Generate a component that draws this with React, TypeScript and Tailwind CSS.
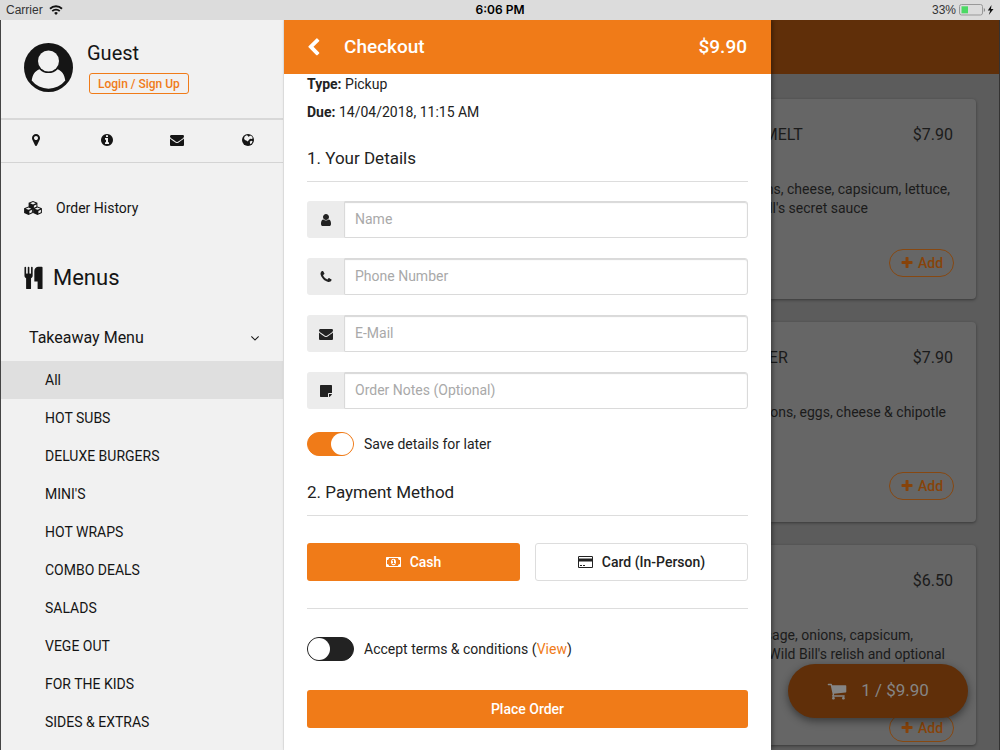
import type { ReactNode } from "react";

const icons = {
  marker: "M1152 640q0-106-75-181t-181-75-181 75-75 181 75 181 181 75 181-75 75-181zm256 0q0 109-33 179l-364 774q-16 33-47.5 52t-67.5 19-67.5-19-46.5-52l-365-774q-33-70-33-179 0-212 150-362t362-150 362 150 150 362z",
  info: "M1152 1376v-160q0-14-9-23t-23-9h-96v-512q0-14-9-23t-23-9h-320q-14 0-23 9t-9 23v160q0 14 9 23t23 9h96v320h-96q-14 0-23 9t-9 23v160q0 14 9 23t23 9h448q14 0 23-9t9-23zm-128-896v-160q0-14-9-23t-23-9h-192q-14 0-23 9t-9 23v160q0 14 9 23t23 9h192q14 0 23-9t9-23zm640 416q0 209-103 385.5t-279.5 279.5-385.5 103-385.5-103-279.5-279.5-103-385.5 103-385.5 279.5-279.5 385.5-103 385.5 103 279.5 279.5 103 385.5z",
  envelope: "M1792 710v794q0 66-47 113t-113 47h-1472q-66 0-113-47t-47-113v-794q44 49 101 87 362 246 497 345 57 42 92.5 65.5t94.5 48 110 24.5h2q51 0 110-24.5t94.5-48 92.5-65.5q170-123 498-345 57-39 100-87zm0-294q0 79-49 151t-122 123q-376 261-468 325-10 7-42.5 31t-54 38.5-52 32.5-57.5 27-50 9h-2q-23 0-50-9t-57.5-27-52-32.5-54-38.5-42.5-31q-91-64-262-182.5t-205-142.5q-62-42-117-115.5t-55-136.5q0-78 41.5-130t118.5-52h1472q65 0 112.5 47t47.5 113z",
  phone: "M1600 1240q0 27-10 70.5t-21 68.5q-21 50-122 106-94 51-186 51-27 0-53-3.5t-57.5-12.5-47-14.5-55.5-20.5-49-18q-98-35-175-83-127-79-264-216t-216-264q-48-77-83-175-3-9-18-49t-20.5-55.5-14.5-47-12.5-57.5-3.5-53q0-92 51-186 56-101 106-122 25-11 68.5-21t70.5-10q14 0 21 3 18 6 53 76 11 19 30 54t35 63.5 31 53.5q3 4 17.5 25t21.5 35.5 7 28.5q0 20-28.5 50t-62 55-62 53-28.5 46q0 9 5 22.5t8.5 20.5 14 24 11.5 19q76 137 174 235t235 174q2 1 19 11.5t24 14 20.5 8.5 22.5 5q18 0 46-28.5t53-62 55-62 50-28.5q14 0 28.5 7t35.5 21.5 25 17.5q25 15 53.5 31t63.5 35 54 30q70 35 76 53 3 7 3 21z",
  user: "M1536 1399q0 109-62.5 187t-150.5 78h-854q-88 0-150.5-78t-62.5-187q0-85 8.5-160.5t31.5-152 58.5-131 94-89 134.5-34.5q131 128 313 128t313-128q76 0 134.5 34.5t94 89 58.5 131 31.5 152 8.5 160.5zm-256-887q0 159-112.5 271.5t-271.5 112.5-271.5-112.5-112.5-271.5 112.5-271.5 271.5-112.5 271.5 112.5 112.5 271.5z",
  cart: "M704 1536q0 52-38 90t-90 38-90-38-38-90 38-90 90-38 90 38 38 90zm896 0q0 52-38 90t-90 38-90-38-38-90 38-90 90-38 90 38 38 90zm128-1088v512q0 24-16.5 42.5t-40.5 21.5l-1044 122q13 60 13 70 0 16-24 64h920q26 0 45 19t19 45-19 45-45 19h-1024q-26 0-45-19t-19-45q0-11 8-31.5t16-36 21.5-40 15.5-29.5l-177-823h-204q-26 0-45-19t-19-45 19-45 45-19h256q16 0 28.5 6.5t19.5 15.5 13 24.5 8 26 5.5 29.5 4.5 26h1201q26 0 45 19t19 45z",
  plus: "M1600 736v192q0 40-28 68t-68 28h-416v416q0 40-28 68t-68 28h-192q-40 0-68-28t-28-68v-416h-416q-40 0-68-28t-28-68v-192q0-40 28-68t68-28h416v-416q0-40 28-68t68-28h192q40 0 68 28t28 68v416h416q40 0 68 28t28 68z",
  note: "M1152 1248v416h-928q-40 0-68-28t-28-68v-1344q0-40 28-68t68-28h1344q40 0 68 28t28 68v928h-416q-40 0-68 28t-28 68zm128 32h381q-15 82-65 132l-184 184q-50 50-132 65v-381z",
  back: "M1427 301l-531 531 531 531q19 19 19 45t-19 45l-166 166q-19 19-45 19t-45-19l-742-742q-19-19-19-45t19-45l742-742q19-19 45-19t45 19l166 166q19 19 19 45t-19 45z",
  down: "M1395 736q0 13-10 23l-466 466q-10 10-23 10t-23-10l-466-466q-10-10-10-23t10-23l50-50q10-10 23-10t23 10l393 393 393-393q10-10 23-10t23 10l50 50q10 10 10 23z",
  cutlery: "M832 128v640q0 61-35.5 111t-92.5 70v779q0 52-38 90t-90 38h-128q-52 0-90-38t-38-90v-779q-57-20-92.5-70t-35.5-111v-640q0-26 19-45t45-19 45 19 19 45v416q0 26 19 45t45 19 45-19 19-45v-416q0-26 19-45t45-19 45 19 19 45v416q0 26 19 45t45 19 45-19 19-45v-416q0-26 19-45t45-19 45 19 19 45zm768 0v1600q0 52-38 90t-90 38h-128q-52 0-90-38t-38-90v-512h-224q-13 0-22.5-9.5t-9.5-22.5v-800q0-132 94-226t226-94h256q26 0 45 19t19 45z",
  card: "M1760 128q66 0 113 47t47 113v1216q0 66-47 113t-113 47h-1600q-66 0-113-47t-47-113v-1216q0-66 47-113t113-47h1600zm-1600 128q-13 0-22.5 9.5t-9.5 22.5v160h1664v-160q0-13-9.5-22.5t-22.5-9.5h-1600zm1600 1280q13 0 22.5-9.5t9.5-22.5v-672h-1664v672q0 13 9.5 22.5t22.5 9.5h1600zm-1504-128v-128h256v128h-256zm384 0v-128h256v128h-256z",
  money: "M768 1152h384v-96h-128v-448h-114l-148 137 77 80q42-37 55-57h2v288h-128v96zm512-256q0 70-21 142t-59.5 134-101.5 101-138 39-138-39-101.5-101-59.5-134-21-142 21-142 59.5-134 101.5-101 138-39 138 39 101.5 101 59.5 134 21 142zm512 256v-512q-106 0-181-75t-75-181h-1152q0 106-75 181t-181 75v512q106 0 181 75t75 181h1152q0-106 75-181t181-75zm128-832v1152q0 26-19 45t-45 19h-1792q-26 0-45-19t-19-45v-1152q0-26 19-45t45-19h1792q26 0 45 19t19 45z",
};

function Icon({ name, className, wide }: { name: keyof typeof icons; className: string; wide?: boolean }) {
  return (
    <svg viewBox={wide ? "0 0 1920 1792" : "0 0 1792 1792"} className={`shrink-0 ${className}`} fill="currentColor" aria-hidden="true">
      <path d={icons[name]} />
    </svg>
  );
}

function Globe() {
  return (
    <svg viewBox="0 0 24 24" className="size-[14px]" aria-hidden="true">
      <circle cx="12" cy="12" r="10.3" fill="currentColor" />
      <path fill="#f1f1f1" d="M6 6.5 9 4l3 .8 1 2 2.6-2.6 3.4 2 1.2 3-2 1.2-2.4-.6-2 1.8-2.2 2.8-2.6-1.6-2.4-.6L5.2 9.4zM15 14.6l3.4-1.4 1.4 1-1.4 3.4-2.6 1.8z" />
    </svg>
  );
}

function Cubes() {
  return (
    <svg viewBox="0 0 36 28" className="h-[14px] w-[18px] shrink-0" aria-hidden="true">
      {[[18, 8.5], [9, 19.3], [27, 19.3]].map(([x, y]) => (
        <g key={x} transform={`translate(${x} ${y})`}>
          <path fill="currentColor" d="M0-8.5 8.8-4.8V4.5L0 8.7-8.8 4.5V-4.8z" />
          <path fill="#f1f1f1" d="M0-6.4 5.6-4 0-1.7-5.6-4zM1.8.8 6.8-1.6V3.2L1.8 5.7z" />
        </g>
      ))}
    </svg>
  );
}

function StatusBar() {
  return (
    <header className="flex h-5 shrink-0 items-center bg-[#dcdcdc] px-[6px] text-[12px] text-[#333]">
      <div className="flex flex-1 items-center gap-[6px]">
        <span className="font-['Liberation_Sans',sans-serif]">Carrier</span>
        <svg viewBox="0 0 28 20" className="h-[10px] w-[14px]" fill="none" stroke="#111" strokeWidth="3.6" aria-hidden="true">
          <path d="M2 7.5a17 17 0 0 1 24 0M6.5 12.3a10.5 10.5 0 0 1 15 0" />
          <path d="M10.2 15.8a5.4 5.4 0 0 1 7.6 0L14 19.8z" fill="#111" stroke="none" />
        </svg>
      </div>
      <span className="font-['Inter',sans-serif] font-semibold text-black">6:06 PM</span>
      <div className="flex flex-1 items-center justify-end gap-[3px]">
        <span className="font-['Liberation_Sans',sans-serif]">33%</span>
        <svg viewBox="0 0 35 12" className="h-[12px] w-[35px]" aria-hidden="true">
          <rect x=".5" y=".5" width="23" height="10.5" rx="2" fill="none" stroke="#999" />
          <rect x="2.5" y="2.3" width="6.5" height="7" fill="#4cd964" />
          <path d="M24.8 4v4q1.3-.5 1.3-2t-1.3-2z" fill="#888" />
          <path d="M32.5 1 28.8 6.5h2.4L29.8 11l4.7-6H32z" fill="#111" />
        </svg>
      </div>
    </header>
  );
}

const categories = ["All", "HOT SUBS", "DELUXE BURGERS", "MINI'S", "HOT WRAPS", "COMBO DEALS", "SALADS", "VEGE OUT", "FOR THE KIDS", "SIDES & EXTRAS"];

function Sidebar() {
  return (
    <aside className="w-[284px] shrink-0 overflow-hidden border-r border-l border-r-[#e4e4e4] border-l-[#444] bg-[#f1f1f1] text-[#151515]">
      <div className="flex h-[100px] items-center gap-[14px] border-b-2 border-[#d8d8d8] px-[23px] pb-[3px]">
        <svg viewBox="0 0 49 49" className="size-[49px] shrink-0" aria-hidden="true">
          <circle cx="24.5" cy="24.5" r="24.5" fill="#151515" />
          <circle cx="24.5" cy="18" r="10.5" fill="#f1f1f1" />
          <path d="M7.7 37.5C8.5 31.5 11 28 15.4 26.2a12.6 12.6 0 0 0 18.2 0C38 28 40.500 31.500 41.3 37.500a21.3 21.3 0 0 1-33.6 0z" fill="#f1f1f1" />
        </svg>
        <div className="flex flex-col items-start gap-[8px]">
          <span className="text-[20px] leading-[24px]">Guest</span>
          <button className="ml-[2px] h-[21px] rounded-[3px] border border-[#f07b18] px-2 text-[12px] font-medium leading-none text-[#f07b18]">Login / Sign Up</button>
        </div>
      </div>
      <nav className="grid h-[43px] grid-cols-4 place-items-center border-b border-[#d4d4d4] pb-[2px]" aria-label="Store information">
        <button aria-label="Location"><Icon name="marker" className="size-[14px]" /></button>
        <button aria-label="Information"><Icon name="info" className="size-[14px]" /></button>
        <button aria-label="Contact"><Icon name="envelope" className="size-[14px]" /></button>
        <button aria-label="Website"><Globe /></button>
      </nav>
      <a href="#history" className="mt-[35px] flex h-5 items-center gap-[14px] pl-[23px] text-[14px]">
        <Cubes />Order History
      </a>
      <h2 className="mt-11 flex h-[30px] items-center gap-[8px] pl-[21px] text-[22px]">
        <Icon name="cutlery" className="size-[23px]" />Menus
      </h2>
      <button className="mt-[23px] flex h-[46px] w-full items-center justify-between pr-[21px] pl-7 text-[16px]">
        Takeaway Menu<Icon name="down" className="size-[14px]" />
      </button>
      <nav aria-label="Menu categories">
        {categories.map((c, i) => (
          <a key={c} href="#menu" className={`flex h-[38px] items-center pl-[44px] text-[14px] ${i === 0 ? "bg-[#dfdfdf]" : ""}`}>{c}</a>
        ))}
      </nav>
    </aside>
  );
}

function Field({ icon, label, type }: { icon: keyof typeof icons; label: string; type: string }) {
  return (
    <label className="flex h-[37px] text-[#222]">
      <span className="flex w-[37px] shrink-0 items-center justify-center rounded-l-[3px] bg-[#ececec]"><Icon name={icon} className="size-[14px]" /></span>
      <input type={type} aria-label={label} placeholder={label} className="min-w-0 flex-1 rounded-r-[3px] border border-[#dadada] bg-white px-[10px] text-[14px] shadow-[inset_0_1px_1px_#d8d8d8] outline-none placeholder:text-[#a9a9a9]" />
    </label>
  );
}

function Toggle({ id, on, children }: { id: string; on?: boolean; children: ReactNode }) {
  return (
    <div className="flex h-6 items-center gap-[10px] text-[14px]">
      <input
        id={id}
        type="checkbox"
        role="switch"
        defaultChecked={on}
        className="h-6 w-[47px] shrink-0 appearance-none rounded-full border border-[#222] bg-[#222] before:block before:size-[22px] before:rounded-full before:bg-white checked:border-[#f07b18] checked:bg-[#f07b18] checked:before:ml-auto"
      />
      <label htmlFor={id}>{children}</label>
    </div>
  );
}

function Checkout() {
  return (
    <main className="relative z-10 flex w-[487px] shrink-0 flex-col bg-white text-[#222] shadow-[2px_0_4px_rgba(0,0,0,0.35)]">
      <div className="flex h-[54px] shrink-0 items-center bg-[#f07b18] px-6 text-[19px] font-medium text-white">
        <button aria-label="Back"><Icon name="back" className="-ml-1 size-[19px]" /></button>
        <h1 className="ml-[21px] flex-1">Checkout</h1>
        <span>$9.90</span>
      </div>
      <div className="flex flex-col px-[23px] text-[14px]">
        <p className="h-7 leading-[21px]"><b>Type:</b> Pickup</p>
        <p className="h-7 leading-[21px]"><b>Due:</b> 14/04/2018, 11:15 AM</p>
        <h2 className="mt-4 h-[36px] border-b border-[#ddd] text-[17px] leading-[24px]">1. Your Details</h2>
        <div className="mt-[19px] flex flex-col gap-5">
          <Field icon="user" label="Name" type="text" />
          <Field icon="phone" label="Phone Number" type="tel" />
          <Field icon="envelope" label="E-Mail" type="email" />
          <Field icon="note" label="Order Notes (Optional)" type="text" />
        </div>
        <div className="mt-[23px]"><Toggle id="save" on>Save details for later</Toggle></div>
        <h2 className="mt-6 h-[36px] border-b border-[#ddd] text-[17px] leading-[24px]">2. Payment Method</h2>
        <div className="mt-[27px] grid grid-cols-2 gap-[15px] border-b border-[#ddd] pb-[27px] font-medium">
          <button className="flex h-[38px] items-center justify-center gap-[9px] rounded-[3px] bg-[#f07b18] text-white"><Icon name="money" wide className="h-[14px] w-[15px]" />Cash</button>
          <button className="flex h-[38px] items-center justify-center gap-[9px] rounded-[3px] border border-[#ddd]"><Icon name="card" wide className="h-[14px] w-[15px]" />Card (In-Person)</button>
        </div>
        <div className="mt-[28px]"><Toggle id="terms">Accept terms &amp; conditions (<a href="#terms" className="text-[#f07b18]">View</a>)</Toggle></div>
        <button className="mt-[29px] h-[38px] rounded-[3px] bg-[#f07b18] font-medium text-white">Place Order</button>
      </div>
    </main>
  );
}

const items = [
  {
    title: "MELT",
    titleEnd: "pr-[110px]",
    price: "$7.90",
    lines: [
      { text: "ms, cheese, capsicum, lettuce,", end: "pr-[2px]" },
      { text: "ll's secret sauce", end: "pr-[84px]" },
    ],
  },
  {
    title: "ER",
    titleEnd: "pr-[125px]",
    price: "$7.90",
    lines: [{ text: "ions, eggs, cheese & chipotle", end: "pr-[6px]" }],
  },
  {
    price: "$6.50",
    lines: [
      { text: "sage, onions, capsicum,", end: "pr-[39px]" },
      { text: "Wild Bill's relish and optional", end: "pr-[7px]" },
    ],
  },
];

function MenuPanel() {
  return (
    <section className="relative min-w-0 flex-1 overflow-hidden border-r border-[#333] bg-[#5c5c5c] text-[#1b1b1b]">
      <div className="h-[54px] bg-[#602f09]" />
      <div className="flex flex-col gap-[23px] pt-[25px] pr-[23px]">
        {items.map((item) => (
          <article key={item.lines[0].text} className="flex h-[200px] shrink-0 flex-col rounded-r-[4px] bg-[#666] pr-[23px] shadow-[0_1px_3px_rgba(0,0,0,0.4)]">
            <div className="mt-6 flex h-6 items-center justify-end text-[16px]">
              {item.title && (
                <h3 className="flex w-0 flex-1 justify-end whitespace-nowrap">
                  <span className={item.titleEnd}>{item.title}</span>
                </h3>
              )}
              <span>{item.price}</span>
            </div>
            <div className="mt-[33px] h-[38px] pr-px text-[14px] leading-[19px]">
              {item.lines.map((line) => (
                <p key={line.text} className={`flex justify-end whitespace-nowrap ${line.end}`}>{line.text}</p>
              ))}
            </div>
            <button className={`-mr-px flex h-7 w-[65px] shrink-0 items-center justify-center gap-[4px] self-end rounded-full border border-[#874811] text-[14px] font-medium text-[#87430a] ${item.title ? "mt-[31px]" : "mt-[50px]"}`}>
              <Icon name="plus" className="size-[14px]" />Add
            </button>
          </article>
        ))}
      </div>
      <button className="absolute right-[31px] bottom-[32px] flex h-[54px] w-[180px] items-center justify-center gap-[14px] rounded-full bg-[#602f09] text-[17px] text-[#858585] shadow-[0_3px_8px_rgba(0,0,0,0.45)]">
        <Icon name="cart" className="size-[20px]" />1 / $9.90
      </button>
    </section>
  );
}

export default function App() {
  return (
    <div className="flex h-screen flex-col overflow-hidden bg-white font-['Roboto',sans-serif]">
      <StatusBar />
      <div className="flex min-h-0 flex-1 overflow-hidden">
        <Sidebar />
        <Checkout />
        <MenuPanel />
      </div>
    </div>
  );
}
